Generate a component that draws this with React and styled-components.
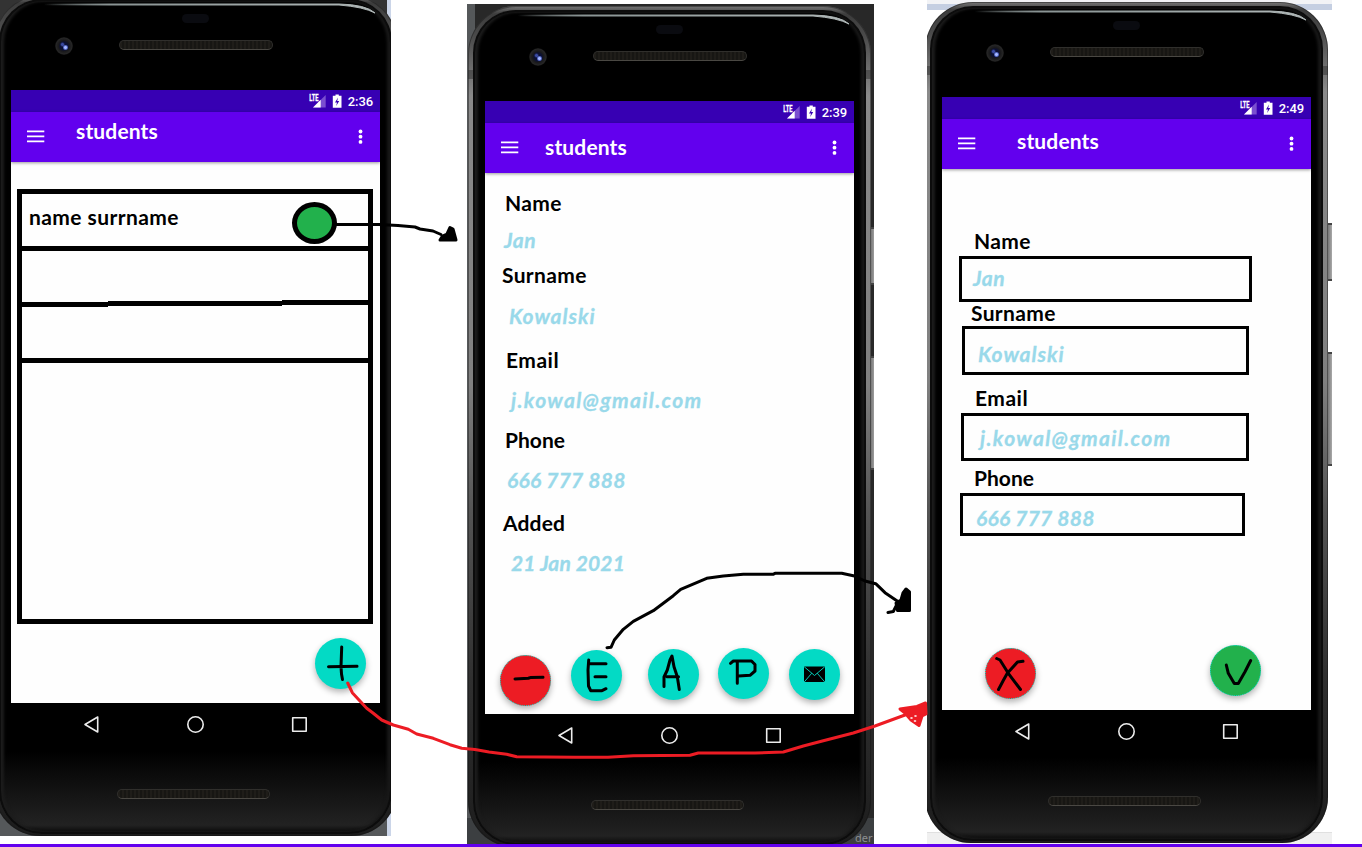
import React from 'react';
import styled, { createGlobalStyle } from 'styled-components';

const GlobalStyle = createGlobalStyle`
  * { box-sizing: border-box; }
  html, body { margin: 0; background: #fff; }
  body { overflow: hidden; }
`;

const Board = styled.main`
  position: relative;
  width: 1362px;
  height: 847px;
  display: flex;
  flex-direction: column;
  justify-content: space-between;
  font-family: Lato, 'Liberation Sans', sans-serif;
`;

const Phones = styled.div`
  display: flex;
  height: 844px;
`;

const Frame = styled.section`
  flex: none;
  width: ${(p) => p.$w}px;
  height: ${(p) => p.$h}px;
  margin: ${(p) => p.$top}px 0 0 ${(p) => p.$gap}px;
  background: ${(p) => p.$backdrop};
  overflow: hidden;
`;

const Body = styled.div`
  position: relative;
  width: 403px;
  height: 841px;
  margin: ${(p) => p.$y}px 0 0 ${(p) => p.$x}px;
  padding: 4px 5px 2px;
  border-radius: 48px 48px 46px 46px;
  background: linear-gradient(180deg, #777 0, #3c3c3c 8px, #4a4a4a 30px, #8a8a8a 90px, #808080 45%, #555 60%, #303030 80%, #1c1c1c 100%);
  box-shadow: inset 0 0 0 1px rgba(20, 20, 20, 0.45);
`;

const Glass = styled.div`
  display: flex;
  flex-direction: column;
  width: 393px;
  height: 835px;
  border-radius: 43px;
  background: linear-gradient(180deg, transparent 752px, #0b0b0b 775px, #222 826px, #0c0c0c 833px) #000;
  box-shadow: inset 0 0 0 2px #0c0c0c, inset 3px 0 3px 2px #1c1c1c, inset -3px 0 3px 2px #181818, inset 0 3px 0 #050505;
`;

const SideKey = styled.i`
  position: absolute;
  left: 403px;
  top: ${(p) => p.$top}px;
  width: 4px;
  height: ${(p) => p.$h}px;
  background: linear-gradient(90deg, #777, #aaa);
  border: solid #444;
  border-width: 2px 0;
`;

const Antenna = styled.i`
  position: absolute;
  ${(p) => p.$side}: 0;
  top: ${(p) => p.$top}px;
  width: 5px;
  height: 9px;
  background: rgba(40, 40, 40, 0.45);
`;

const Shine = styled.svg`
  position: absolute;
  left: 0;
  top: 0;
`;

const Head = styled.header`
  display: grid;
  grid-template-columns: 110px 1fr;
  grid-template-rows: 9px 1fr;
  row-gap: 8px;
  height: 91px;
  padding-top: 15px;
`;

const Sensor = styled.span`
  grid-column: 2;
  margin-left: 73px;
  width: 27px;
  height: 9px;
  border-radius: 5px;
  background: #0a0b10;
`;

const Camera = styled.span`
  grid-column: 1;
  margin: 6px 0 0 56px;
  width: 18px;
  height: 18px;
  border-radius: 50%;
  background:
    radial-gradient(circle at 10.500px 10.500px, #a6b8ff 0 1px, #5f74d8 1.8px, transparent 3px),
    radial-gradient(circle at 7.500px 7.500px, #3a4aa0 0 1px, transparent 2.500px),
    radial-gradient(circle, #0c1030 0 4px, #19191b 5.500px, #262626 8px, #111 9px);
`;

const Speaker = styled.span`
  flex: none;
  width: ${(p) => p.$w}px;
  height: 10px;
  margin: ${(p) => p.$m};
  border: 1px solid #302f2c;
  border-bottom-color: #4a4843;
  border-radius: 5px;
  background: repeating-linear-gradient(90deg, #1f1d19 0 2px, #171613 2px 4px);
`;

const Screen = styled.div`
  flex: none;
  display: flex;
  flex-direction: column;
  width: 369px;
  height: 613px;
  margin-left: 12px;
  background: #fefefe;
`;

const StatusBar = styled.div`
  flex: none;
  display: flex;
  justify-content: flex-end;
  align-items: center;
  height: 22px;
  padding: 1px 7px 0 0;
  background: #3700b3;
  color: #fff;
  font: 500 13px/21px Roboto, sans-serif;
  letter-spacing: -0.1px;
`;

const StatusIcons = styled.svg`
  margin: -1px 6px 0 0;
`;

const AppBar = styled.div`
  flex: none;
  display: flex;
  height: 50px;
  padding: 0 13px 0 14px;
  background: #6200ee;
  box-shadow: 0 1px 3px rgba(0, 0, 0, 0.4);
`;

const BarIcon = styled.svg`
  margin-top: 14px;
`;

const Title = styled.h1`
  flex: 1;
  margin: ${(p) => p.$y}px 0 0 ${(p) => p.$x}px;
  color: #fff;
  font-size: 21px;
  line-height: 24px;
  font-weight: 700;
  letter-spacing: 0.15px;
`;

const Content = styled.div`
  flex: 1;
  min-height: 0;
`;

const Label = styled.div`
  margin: ${(p) => p.$gap || 0}px 0 0 ${(p) => p.$x}px;
  height: 24px;
  color: #000;
  font-size: 21px;
  line-height: 24px;
  font-weight: 700;
  letter-spacing: ${(p) => p.$ls || 0}px;
  white-space: nowrap;
`;

const Value = styled(Label)`
  color: #99d9ea;
  font-style: italic;
  -webkit-text-stroke: 0.3px #99d9ea;
`;

const Input = styled.div`
  width: ${(p) => p.$w}px;
  height: ${(p) => p.$h}px;
  margin: ${(p) => p.$gap}px 0 0 ${(p) => p.$x}px;
  border: 3px solid #000;
  display: flow-root;
`;

const List = styled.div`
  width: 356px;
  height: 435px;
  margin: 27px 0 0 6px;
  border: 5px solid #000;
`;

const Row = styled.div`
  display: flex;
  height: ${(p) => p.$h}px;
  border-bottom: ${(p) => (p.$line ? '5px solid #000' : 'none')};
`;

const UnevenLine = styled.div`
  display: grid;
  grid-template-columns: 86px 174px 86px;
  height: 7px;
`;

const Segment = styled.span`
  height: 5px;
  margin-top: ${(p) => p.$drop}px;
  background: #000;
`;

const Dot = styled.span`
  width: 45px;
  height: 42px;
  margin: 8px 31px 0 auto;
  border: 5px solid #000;
  border-radius: 50%;
  background: #22b14c;
`;

const Actions = styled.div`
  display: flex;
  align-items: flex-start;
  margin-top: ${(p) => p.$gap}px;
`;

const Fab = styled.span`
  flex: none;
  display: block;
  width: 51px;
  height: 51px;
  margin: ${(p) => p.$drop || 0}px 0 0 ${(p) => p.$gap}px;
  border-radius: 50%;
  border: ${(p) => (p.$color ? '1px dotted #03dac5' : 'none')};
  background: ${(p) => p.$color || '#03dac5'};
  box-shadow: 0 3px 6px rgba(0, 0, 0, 0.3);

  svg {
    display: block;
    margin: ${(p) => (p.$color ? '-1px' : '0')};
  }
`;

const NavBar = styled.nav`
  flex: none;
  display: flex;
  align-items: center;
  gap: 84px;
  height: 42px;
  padding-left: 83px;
`;

const Overlay = styled.svg`
  position: absolute;
  inset: 0;
  pointer-events: none;
`;

const Rule = styled.div`
  height: 3px;
  background: #6200ee;
`;

const Stray = styled.span`
  display: block;
  height: 16px;
  margin: -17px 0 0 388px;
  color: #8c8f91;
  font: 11px/16px 'Noto Sans', sans-serif;
`;

function Mark({ d, children }) {
  return (
    <svg width="51" height="51" viewBox="0 0 51 51" fill="none" stroke="#000" strokeWidth="3" strokeLinecap="round" strokeLinejoin="round">
      {d && <path d={d} />}
      {children}
    </svg>
  );
}

function Phone({ frame, x, y, time, titleX, titleY, children, extra }) {
  return (
    <Frame {...frame}>
      <Body $x={x} $y={y}>
        <Glass>
          <Head>
            <Sensor />
            <Camera />
            <Speaker $w={154} $m="9px 0 0 10px" />
          </Head>
          <Screen>
            <StatusBar>
              <StatusIcons width="34" height="16" viewBox="0 0 34 16">
                <path d="M5 14.5 17.7 2v12.500z" fill="#7a4fd0" />
                <path d="M5 14.500 12.700 6.800v7.700z" fill="#fff" />
                <path d="M1 1h9.500v6.500l-1.500 1H1z" fill="#3700b3" />
                <text x="1.300" y="7.700" fill="#fff" stroke="#fff" strokeWidth=".3" fontSize="8.500" fontWeight="700" fontFamily="Roboto" textLength="9" lengthAdjust="spacingAndGlyphs">LTE</text>
                <path d="M27.500 1.500h3.300v1.300h2.700v12h-8.700v-12h2.700z" fill="#fff" />
                <path d="M30 4.500 27 9.500h2l-.800 3.500 3-5h-2z" fill="#3700b3" />
              </StatusIcons>
              {time}
            </StatusBar>
            <AppBar>
              <BarIcon width="21" height="20" viewBox="0 0 21 20">
                <path d="M2 5.300h17.300M2 10.300h17.300M2 15.300h17.300" stroke="#fff" strokeWidth="1.700" />
              </BarIcon>
              <Title $x={titleX} $y={titleY}>students</Title>
              <BarIcon width="14" height="20" viewBox="0 0 14 20" fill="#fff">
                <circle cx="7.500" cy="5.500" r="1.900" />
                <circle cx="7.500" cy="10.700" r="1.900" />
                <circle cx="7.500" cy="15.900" r="1.900" />
              </BarIcon>
            </AppBar>
            <Content>{children}</Content>
          </Screen>
          <NavBar>
            <svg width="20" height="20" fill="none" stroke="#ececec" strokeWidth="1.600" strokeLinejoin="round"><path d="M3 10.500 15.700 3v15z" /></svg>
            <svg width="20" height="20" fill="none" stroke="#ececec" strokeWidth="1.600"><circle cx="9.500" cy="10.500" r="7.700" /></svg>
            <svg width="20" height="20" fill="none" stroke="#ececec" strokeWidth="1.600" strokeLinejoin="round"><path d="M2.700 3.700h13.500v13.500H2.700z" /></svg>
          </NavBar>
          <Speaker $w={153} $m="44px 0 0 118px" />
        </Glass>
        <Shine width="403" height="60" fill="none">
          <defs>
            <linearGradient id="edge" gradientUnits="userSpaceOnUse" x1="50" x2="380"><stop offset="0" stopColor="#8a9494" stopOpacity="0" /><stop offset=".2" stopColor="#8a9494" /><stop offset="1" stopColor="#b0b8b8" /></linearGradient>
          </defs>
          <path d="M50 9H345Q372 9.500 381 18Q370 12 345 10H50z" stroke="url(#edge)" strokeWidth="1" fill="url(#edge)" />
        </Shine>
        <Antenna $side="left" $top={64} />
        <Antenna $side="right" $top={64} />
        <SideKey $top={221} $h={58} />
        <SideKey $top={350} $h={114} />
      </Body>
      {extra}
    </Frame>
  );
}

const student = [
  ['Name', 'Jan'],
  ['Surname', 'Kowalski'],
  ['Email', 'j.kowal@gmail.com'],
  ['Phone', '666 777 888'],
  ['Added', '21 Jan 2021'],
];

const tracking = [
  [0.4, 0.5],
  [0.35, 0.95],
  [0.5, 1.35],
  [0, 0.25],
  [0.15, 0.15],
];

const details = [
  { label: { $x: 20, $gap: 18 }, value: { $x: 19, $gap: 13 } },
  { label: { $x: 17, $gap: 11 }, value: { $x: 24, $gap: 17 } },
  { label: { $x: 21, $gap: 20 }, value: { $x: 26, $gap: 16 } },
  { label: { $x: 20, $gap: 16 }, value: { $x: 22, $gap: 16 } },
  { label: { $x: 18, $gap: 19 }, value: { $x: 26, $gap: 16 } },
];

const form = [
  { label: { $x: 32, $gap: 60 }, box: { $x: 17, $gap: 3, $w: 293, $h: 46 }, value: { $x: 11, $gap: 7 } },
  { label: { $x: 29, $gap: -1 }, box: { $x: 20, $gap: 1, $w: 287, $h: 49 }, value: { $x: 13, $gap: 13 } },
  { label: { $x: 33, $gap: 11 }, box: { $x: 19, $gap: 3, $w: 288, $h: 48 }, value: { $x: 16, $gap: 10 } },
  { label: { $x: 32, $gap: 5 }, box: { $x: 18, $gap: 3, $w: 285, $h: 43 }, value: { $x: 13, $gap: 10 } },
];

export default function App() {
  return (
    <>
      <GlobalStyle />
      <Board>
        <Phones>
          <Phone
            frame={{ $w: 391, $h: 836, $gap: 0, $top: 0, $backdrop: 'linear-gradient(90deg, transparent 387px, #cbd5e8 387px), linear-gradient(#333 50%, #55585a 50%)' }}
            x={-6} y={-5} time="2:36" titleX={30} titleY={7}
          >
            <List>
              <Row $h={57} $line>
                <Label $x={7} $gap={11} $ls={0.42}>name surrname</Label>
                <Dot />
              </Row>
              <Row $h={49} />
              <UnevenLine>
                <Segment $drop={2} />
                <Segment $drop={1} />
                <Segment $drop={0} />
              </UnevenLine>
              <Row $h={56} $line />
            </List>
            <Actions $gap={14}>
              <Fab $gap={304}><Mark d="M26.700 9 26 28.700 26.500 36 27.500 41.500M13.500 28.700 42 28.300" /></Fab>
            </Actions>
          </Phone>

          <Phone
            frame={{ $w: 407, $h: 840, $gap: 76, $top: 4, $backdrop: 'linear-gradient(180deg, transparent 814px, #3c3f41 814px), linear-gradient(90deg, #55585a 8px, #282828 8px)' }}
            x={1} y={2} time="2:39" titleX={25} titleY={12}
            extra={<Stray>der</Stray>}
          >
            {student.map(([label, value], i) => (
              <React.Fragment key={label}>
                <Label {...details[i].label} $ls={tracking[i][0]}>{label}</Label>
                <Value {...details[i].value} $ls={tracking[i][1]}>{value}</Value>
              </React.Fragment>
            ))}
            <Actions $gap={73}>
              <Fab $gap={15} $drop={7} $color="#ed1c24"><Mark d="M15 24 28.300 23.200 31 22.400 43 22.300" /></Fab>
              <Fab $gap={20} $drop={2}><Mark d="M17.700 10 17 20 17.500 36 19.700 40.700H31L35 38.700M19 13.700H35M24 26.700H35" /></Fab>
              <Fab $gap={26} $drop={1}><Mark d="M16 37.500V28L19.300 21 22 11 24 7 26 17.700 29.300 27.700 31.300 40.500M19 27.700H30.500" /></Fab>
              <Fab $gap={19}><Mark d="M12.500 15.300 15.300 13H33.500L37 16.500V23L32 27.300 20.500 28M19.300 14V35.300" /></Fab>
              <Fab $gap={20} $drop={1}>
                <Mark>
                  <path d="M15 17.500h21v15.500H15z" fill="#000" stroke="none" />
                  <path d="M15.500 18 25.500 26.500 35.500 18M15.500 32.700 22.500 24.500M35.500 32.700 28.500 24.500" stroke="#03c9b6" strokeWidth="1" />
                </Mark>
              </Fab>
            </Actions>
          </Phone>

          <Phone
            frame={{ $w: 405, $h: 845, $gap: 53, $top: 0, $backdrop: 'linear-gradient(180deg, #f2f3f6 4px, #c5cfe2 4px, #c5cfe2 10px, #fff 10px, #fff 832px, #d0d0d0 832px, #f0f0f0 833px)' }}
            x={-2} y={2} time="2:49" titleX={40} titleY={10}
          >
            {form.map(({ label, box, value }, i) => (
              <React.Fragment key={student[i][0]}>
                <Label {...label} $ls={tracking[i][0]}>{student[i][0]}</Label>
                <Input {...box}>
                  <Value {...value} $ls={tracking[i][1]}>{student[i][1]}</Value>
                </Input>
              </React.Fragment>
            ))}
            <Actions $gap={109}>
              <Fab $gap={43} $drop={3} $color="#ed1c24"><Mark d="M11.700 10.500 15 12 23.300 25.300 35.500 41.500M38 13.300 32.500 14 22.300 25.300 18 33 13.500 41.500" /></Fab>
              <Fab $gap={174} $color="#22b14c"><Mark d="M16.300 20 18.300 28.300 24.300 38.500H28.300L35 26.700 40.700 15.500" /></Fab>
            </Actions>
          </Phone>
        </Phones>
        <Rule />
        <Overlay width="1362" height="847" fill="none" strokeWidth="3" strokeLinecap="round" strokeLinejoin="round">
          <g stroke="#000">
            <path d="M336 224.500H379L398 225.500 415 227 420 229 433 231 441 234.500" />
            <path d="M450 227.500 453 229 456 240 440 240 442.500 236 447 234z" fill="#000" />
            <path d="M607 647.700 611 647.300 614.300 640 623.300 629.300 633.300 621.300 653.300 610.700 673.300 595.700 680.700 589.300 706.700 578.300 723.300 576 743.300 574.300H773L775 573.300H841.700L853.300 575.700 865 581 875.700 583.700 885 592.700 898.300 601.700 893.300 611.500 888 612.500" />
            <path d="M903 593 906 589 909.500 592V610.500H897.500L896 603 901 600z" fill="#000" />
          </g>
          <g stroke="#ed1c24">
            <path d="M347.700 683 352.300 692.700 366.700 708.300 373 713 381.700 720 393.300 725 408.300 729.300 416.700 734 433.300 738.300 450 744.700 461.700 748.300 475 749.500 489 752 506.700 754.300 516.700 756.700 575 757.300H608L633.300 755.700 690 755.300 698.300 753H755L783.300 752 803.300 746 823.300 740.700 853.300 733 875 726 905 715" />
            <path d="M900 709 917 706.500 925.500 703 926 714 922 716 919 725.500 911 720 905 713z" fill="#ed1c24" />
          </g>
          <path d="M911 718h1M915 716h1M914.500 721h1" stroke="#fff" strokeWidth="1.600" />
        </Overlay>
      </Board>
    </>
  );
}
